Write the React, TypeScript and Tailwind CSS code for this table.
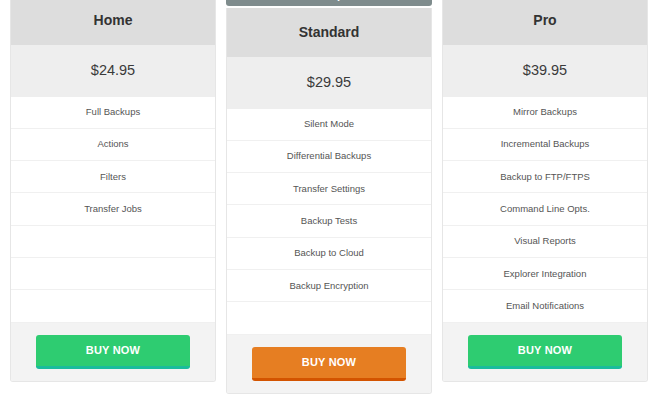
import React from "react";

type Plan = {
  name: string;
  price: string;
  features: string[];
  featured?: boolean;
};

const plans: Plan[] = [
  { name: "Home", price: "$24.95", features: ["Full Backups", "Actions", "Filters", "Transfer Jobs", "", "", ""] },
  {
    name: "Standard",
    price: "$29.95",
    featured: true,
    features: ["Silent Mode", "Differential Backups", "Transfer Settings", "Backup Tests", "Backup to Cloud", "Backup Encryption", ""],
  },
  {
    name: "Pro",
    price: "$39.95",
    features: ["Mirror Backups", "Incremental Backups", "Backup to FTP/FTPS", "Command Line Opts.", "Visual Reports", "Explorer Integration", "Email Notifications"],
  },
];

function Card({ plan }: { plan: Plan }) {
  return (
    <div className="w-[206px] border border-t-0 border-[#e6e6e6] rounded-b-[3px] overflow-hidden bg-white">
      <div className="h-[49px] bg-[#dddddd] flex items-center justify-center text-[14px] font-bold text-[#333333]">
        {plan.name}
      </div>
      <div className="h-[51.5px] bg-[#eeeeee] flex items-center justify-center text-[14.5px] text-[#3a3a3a]">
        {plan.price}
      </div>
      <div>
        {plan.features.map((f, i) => (
          <div
            key={i}
            className="h-[32.3px] border-b border-[#f0f0f0] flex items-center justify-center text-[9.5px] text-[#555555]"
          >
            {f}
          </div>
        ))}
      </div>
      <div className="bg-[#f3f3f3] pt-[12px] pb-[12px] flex justify-center">
        <button
          className={
            plan.featured
              ? "w-[154px] h-[34px] rounded-[3px] bg-[#e67e22] border-b-[3px] border-[#d35400] text-white font-bold text-[11px] tracking-[0.2px]"
              : "w-[154px] h-[34px] rounded-[3px] bg-[#2ecc71] border-b-[3px] border-[#1abc9c] text-white font-bold text-[11px] tracking-[0.2px]"
          }
        >
          BUY NOW
        </button>
      </div>
    </div>
  );
}

export default function App() {
  return (
    <div
      className="w-[660px] h-[399px] bg-white overflow-hidden"
      style={{ fontFamily: '"Liberation Sans", Arial, sans-serif' }}
    >
      <div className="flex items-start gap-[10px] pl-[10px] mt-[-24px]">
        <div className="mt-[20px]">
          <Card plan={plans[0]} />
        </div>
        <div className="flex flex-col">
          <div className="h-[30px] w-[206px] bg-[#7f8c8d] rounded-b-[3px] flex items-end justify-center overflow-hidden">
            <span className="text-white text-[11px] font-bold leading-none mb-[4px] translate-y-[-1px]">Most Popular</span>
          </div>
          <div className="mt-[2px]">
            <Card plan={plans[1]} />
          </div>
        </div>
        <div className="mt-[20px]">
          <Card plan={plans[2]} />
        </div>
      </div>
    </div>
  );
}
